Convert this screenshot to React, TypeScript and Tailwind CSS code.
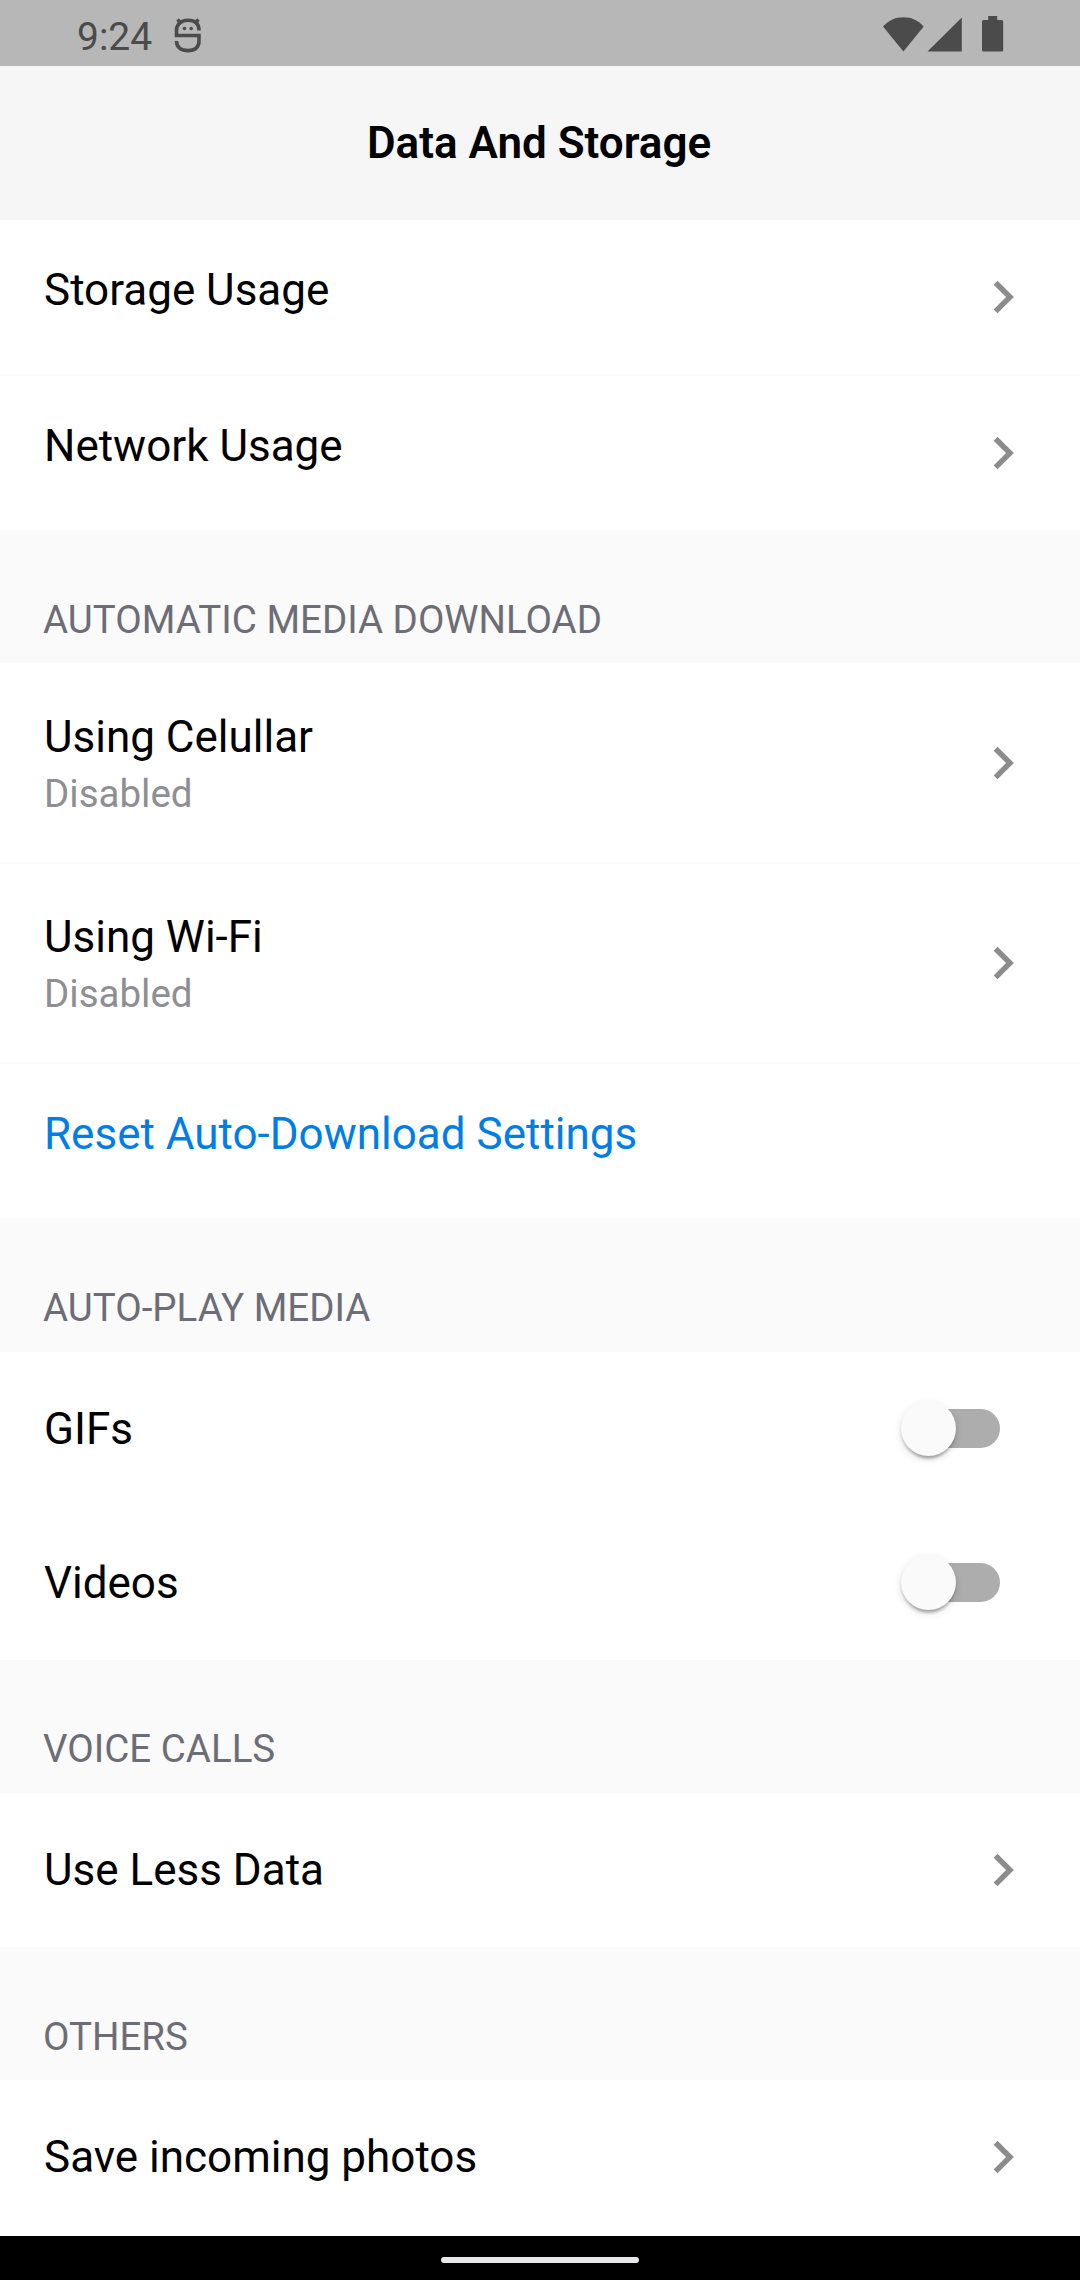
import React from "react";

function Chevron() {
  return (
    <svg width="66" height="66" viewBox="0 0 24 24" className="mr-[44px] shrink-0" fill="#8c8c8c">
      <path d="M10 6.1 8.6 7.5 13.1 12l-4.5 4.5L10 17.9 15.95 12z" />
    </svg>
  );
}

function StatusBar() {
  return (
    <div className="flex h-[66px] items-start bg-[#b7b7b7] pl-[77px] text-[#4b4b4b]">
      <div className="mt-[14px] text-[39px] leading-[46px]">9:24</div>
      <svg width="28" height="38" viewBox="0 0 28 38" className="mt-[16px] ml-[22px]" fill="none" stroke="currentColor" strokeWidth="3.6">
        <path d="M25 14.500C25 7 20.500 4.300 14 4.300S2.500 8 2.500 14.500V19.500H25V25C25 31.500 20.500 34.600 14 34.600S2.500 31.500 2.500 25" />
        <path d="M3.500 3.500l4 4M24.500 3.500l-4 4" />
        <circle cx="10.500" cy="12.500" r="1.800" fill="currentColor" stroke="none" />
        <circle cx="17.200" cy="12.500" r="1.800" fill="currentColor" stroke="none" />
      </svg>
      <svg width="122" height="38" viewBox="0 0 122 38" className="mt-[15px] mr-[76px] ml-auto" fill="currentColor">
        <path d="M1 11.500C6.500 5.500 13 2.200 21.400 2.200S36.300 5.500 41.700 11.500L21.400 36.500z" />
        <path d="M45.500 36.600 79.800 2.500V36.600z" />
        <path d="M106.200 1h9v4h4.300q1.700 0 1.700 1.700v28.200q0 1.700-1.700 1.700h-17.800q-1.700 0-1.700-1.700v-28.200q0-1.700 1.700-1.700h4.500z" />
      </svg>
    </div>
  );
}

type RowProps = { label: string; sub?: string; raised?: boolean; divider?: boolean; link?: boolean };

function Row({ label, sub, raised, divider, link }: RowProps) {
  return (
    <div className={`flex w-full shrink-0 items-center justify-between bg-white pl-[44px] ${sub ? "h-[198.5px]" : "h-[154px]"} ${divider ? "mb-[2px]" : ""}`}>
      <div className={raised ? "pb-[14px]" : sub ? "pt-[1px]" : ""}>
        <div className={`text-[44px] leading-[52px] ${link ? "text-[#007ee5]" : ""}`}>{label}</div>
        {sub && <div className="mt-[8px] text-[38.5px] leading-[45px] text-[#8e8e93]">{sub}</div>}
      </div>
      {!link && <Chevron />}
    </div>
  );
}

function Section({ title }: { title: string }) {
  return (
    <div className="flex h-[133.25px] shrink-0 items-end pb-[21.5px] pl-[43px] text-[38.5px] leading-[45px] text-[#6d6d78]">
      {title}
    </div>
  );
}

function Toggle() {
  return (
    <div className="relative mr-[80px] h-[38.5px] w-[91px] rounded-full bg-[#adadad]">
      <div className="absolute -top-[8px] -left-[8px] size-[55px] rounded-full bg-[#fafafa] shadow-[0_5px_3px_-3px_rgba(0,0,0,0.2),0_3px_3px_rgba(0,0,0,0.14),0_3px_8px_rgba(0,0,0,0.12)]" />
    </div>
  );
}

function ToggleRow({ label }: { label: string }) {
  return (
    <div className="flex h-[154px] shrink-0 items-center justify-between bg-white pl-[44px]">
      <div className="text-[44px] leading-[52px]">{label}</div>
      <Toggle />
    </div>
  );
}

export default function App() {
  return (
    <div className="flex h-[2280px] w-[1080px] flex-col overflow-hidden bg-[#fafafa] font-['Roboto',sans-serif] text-black">
      <StatusBar />
      <div className="flex h-[154px] items-center justify-center bg-[#f6f6f6] pr-[2px] text-[44px] font-semibold">Data And Storage</div>
      <Row label="Storage Usage" raised divider />
      <Row label="Network Usage" raised />
      <Section title="AUTOMATIC MEDIA DOWNLOAD" />
      <Row label="Using Celullar" sub="Disabled" divider />
      <Row label="Using Wi-Fi" sub="Disabled" divider />
      <Row label="Reset Auto-Download Settings" raised link />
      <Section title="AUTO-PLAY MEDIA" />
      <ToggleRow label="GIFs" />
      <ToggleRow label="Videos" />
      <Section title="VOICE CALLS" />
      <Row label="Use Less Data" />
      <Section title="OTHERS" />
      <div className="flex-1 bg-white">
        <Row label="Save incoming photos" />
      </div>
      <div className="flex h-[44px] shrink-0 items-center justify-center bg-black pt-[4px]">
        <div className="h-[6px] w-[198px] rounded-full bg-[#e8e6ea]" />
      </div>
    </div>
  );
}
